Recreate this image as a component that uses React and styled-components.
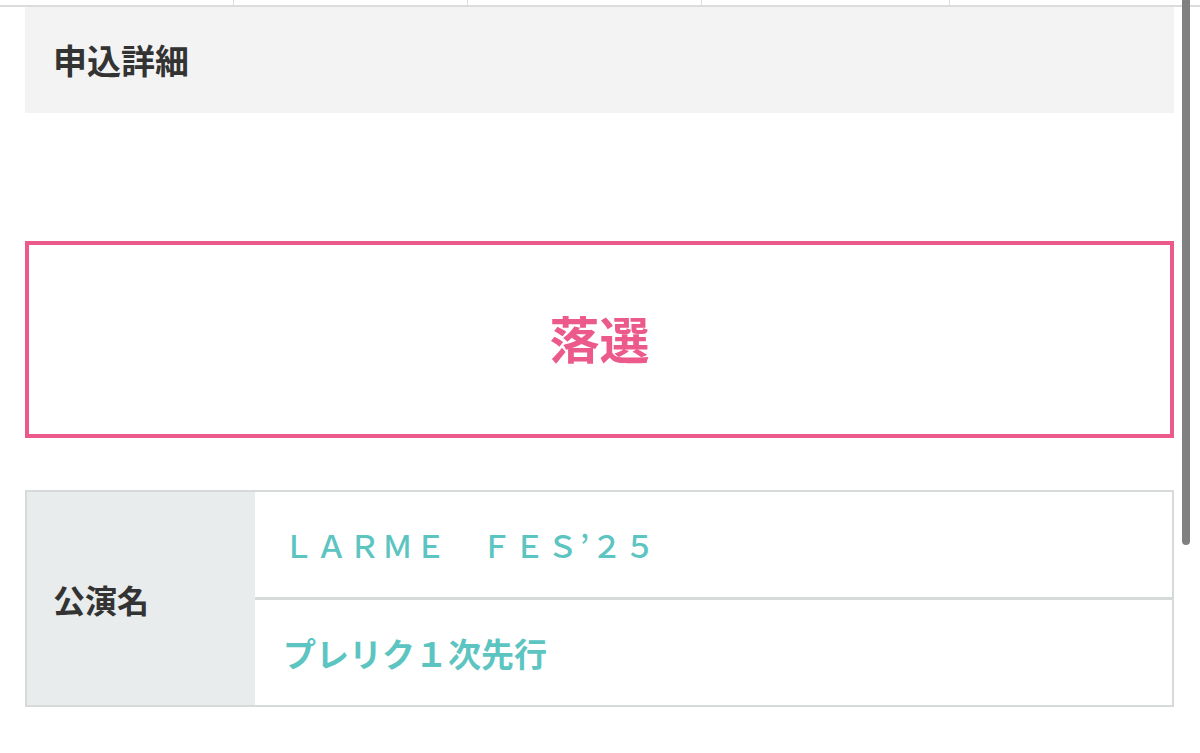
import React from 'react';
import styled, { createGlobalStyle } from 'styled-components';

const GlobalStyle = createGlobalStyle`
  html, body {
    margin: 0;
    padding: 0;
    background: #fff;
    font-family: "Noto Sans CJK JP", "Noto Sans", sans-serif;
    color: #333;
  }
`;

export default function App() {
  const tabs = [234, 234, 234, 248, 233];
  const rows = ['ＬＡＲＭＥ　ＦＥＳ’２５', 'プレリク１次先行'];

  return (
    <Page>
      <GlobalStyle />
      <TopStrip>
        {tabs.map((w, i) => (
          <TopCell key={i} w={w} />
        ))}
      </TopStrip>
      <Content>
        <SectionHead>申込詳細</SectionHead>
        <ResultBox>落選</ResultBox>
        <InfoTable>
          <LabelCell>公演名</LabelCell>
          <ValueCol>
            {rows.map((r, i) => (
              <ValueRow key={i} first={i === 0}>
                {r}
              </ValueRow>
            ))}
          </ValueCol>
        </InfoTable>
      </Content>
      <ScrollThumb />
    </Page>
  );
}

const Page = styled.div`
  position: relative;
  width: 1200px;
  height: 753px;
  overflow: hidden;
`;

const TopStrip = styled.div`
  display: flex;
  height: 5px;
  border-bottom: 2px solid #dcdcdc;
`;

const TopCell = styled.div`
  width: ${(p) => p.w}px;
  border-right: 1px solid #dcdcdc;
  box-sizing: border-box;
  background: #fff;
`;

const Content = styled.div`
  padding: 0 26px 0 25px;
`;

const SectionHead = styled.div`
  height: 106px;
  background: #f3f3f3;
  display: flex;
  align-items: center;
  padding-left: 28px;
  padding-bottom: 2px;
  box-sizing: border-box;
  font-size: 34px;
  font-weight: 700;
  color: #333;
`;

const ResultBox = styled.div`
  margin-top: 128px;
  height: 197px;
  box-sizing: border-box;
  border: 4px solid #ec5a8c;
  padding-bottom: 6px;
  display: flex;
  align-items: center;
  justify-content: center;
  font-size: 50px;
  font-weight: 700;
  color: #ec5a8c;
`;

const InfoTable = styled.div`
  margin-top: 52px;
  display: flex;
  border: 2px solid #d6dadb;
  height: 217px;
  box-sizing: border-box;
`;

const LabelCell = styled.div`
  width: 228px;
  background: #e8ecec;
  display: flex;
  align-items: center;
  padding-left: 26px;
  box-sizing: border-box;
  font-size: 32px;
  font-weight: 700;
  color: #333;
`;

const ValueCol = styled.div`
  flex: 1;
  display: flex;
  flex-direction: column;
`;

const ValueRow = styled.div`
  flex: 1;
  display: flex;
  align-items: center;
  padding-left: 28px;
  color: #5cc4c1;
  font-size: ${(p) => (p.first ? '31px' : '33px')};
  letter-spacing: ${(p) => (p.first ? '2px' : '0')};
  font-weight: ${(p) => (p.first ? 500 : 700)};
  border-top: ${(p) => (p.first ? 'none' : '3px solid #d6dadb')};
`;

const ScrollThumb = styled.div`
  position: absolute;
  top: 0;
  left: 1182px;
  width: 8px;
  height: 545px;
  background: #808080;
  border-radius: 0 0 4px 4px;
`;
